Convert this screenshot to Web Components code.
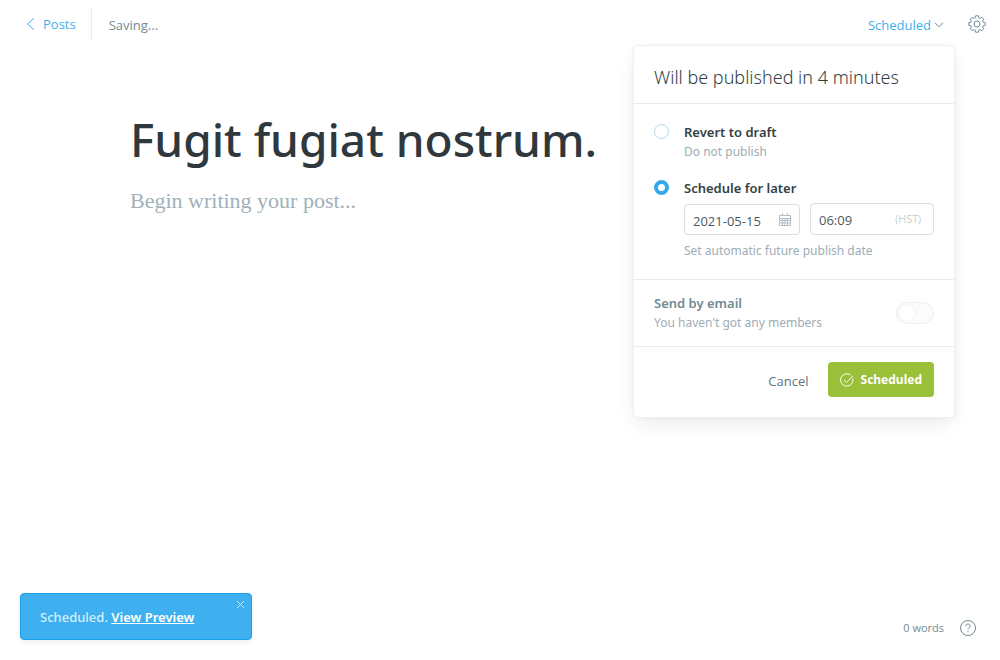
<!DOCTYPE html>
<html lang="en">
<head>
<meta charset="utf-8">
<meta name="viewport" content="width=device-width, initial-scale=1">
<title>Post editor</title>
<style>
  :root {
    --blue: #3eb0ef;
    --blue-dark: #1e9fea;
    --green: #9abf38;
    --dark: #343f44;
    --mid: #738a94;
    --soft: #95a6ae;
    --line: #e3edf3;
    --input-line: #d3e0ea;
  }
  html, body { margin: 0; }
  body {
    background: #fff;
    color: var(--dark);
    font: 400 13px/20px "Open Sans", "Noto Sans", sans-serif;
  }
</style>
</head>
<body>
<post-editor></post-editor>

<script>
function define(name, html) {
  const template = document.createElement('template');
  template.innerHTML = html;
  customElements.define(name, class extends HTMLElement {
    constructor() {
      super();
      this.attachShadow({ mode: 'open' }).append(template.content.cloneNode(true));
    }
  });
}

define('editor-toolbar', `
<style>
  :host { display: flex; align-items: center; height: 48px; padding: 0 14px 0 26px; box-sizing: border-box; position: relative; }
  a { display: flex; align-items: center; gap: 8px; height: 34px; padding-right: 15px; border-right: 1px solid var(--line); color: var(--blue); text-decoration: none; }
  .state { margin-left: 17px; padding-top: 2px; color: var(--mid); }
  .right { margin-left: auto; display: flex; align-items: center; gap: 24px; }
  button { display: flex; align-items: center; gap: 3px; padding: 0; border: 0; background: none; color: var(--blue); font: inherit; cursor: pointer; }
  .status { padding-top: 2px; }
  svg { display: block; fill: none; stroke: var(--mid); }
  a svg { stroke: var(--blue); }
  ::slotted(publish-menu) { position: absolute; top: 45px; right: 45px; z-index: 1; }
</style>
<a href="#posts"><svg width="9" height="14" viewBox="0 0 9 14"><path d="M8 1.2 1.5 7 8 12.8"/></svg>Posts</a>
<span class="state">Saving...</span>
<div class="right">
  <button class="status" aria-haspopup="true" aria-expanded="true">Scheduled<svg width="10" height="8" viewBox="0 0 10 8"><path d="m1 1.8 4 4 4-4"/></svg></button>
  <button aria-label="Settings"><svg width="18" height="18" viewBox="0 0 18 18" stroke-linejoin="round"><circle cx="9" cy="9" r="3"/><path d="M7.200 2.700 7.600.8h2.800l.4 1.900 1.300.6 1.700-1 1.900 1.900-1 1.700.5 1.300 2 .5v2.600l-2 .5-.5 1.300 1 1.700-1.900 1.900-1.700-1-1.300.5-.4 2H7.600l-.4-2-1.300-.5-1.700 1-1.900-1.900 1-1.700-.5-1.300-2-.5V7.700l2-.5.5-1.300-1-1.700 1.900-1.900 1.700 1Z"/></svg></button>
</div>
<slot></slot>`);

define('publish-option', `
<style>
  :host { display: flex; gap: 15px; }
  .mark { display: flex; padding-top: 2px; }
  .body { flex: 1; min-width: 0; }
</style>
<div class="mark"><slot name="control"></slot></div>
<div class="body"><slot></slot></div>`);

define('date-time-field', `
<style>
  :host { display: flex; align-items: flex-end; gap: 10px; }
  .box { display: flex; align-items: center; box-sizing: border-box; height: 31px; padding: 0 8px; border: 1px solid var(--input-line); border-radius: 4px; }
  .date { flex: none; width: 116px; }
  .time { flex: 1; height: 32px; padding-right: 12px; }
  .box, input { min-width: 0; }
  input { flex: 1; width: 0; height: 28px; padding: 2px 0 0; box-sizing: border-box; border: 0; outline: 0; background: none; color: #4b5960; font: inherit; }
  svg { display: block; fill: none; stroke: #b3bfc6; }
  .zone { color: #a9b7be; font-size: 11px; font-weight: 300; }
</style>
<div class="box date"><input type="text" value="2021-05-15" aria-label="Publish date"><svg width="12" height="13" viewBox="0 0 12 13"><path d="M.5 2.5h11v10H.5zM.5 5.5h11M.5 7.5h11M.5 10h11M3.5 5v7.500M6 5v7.500M8.500 5v7.500M3.500 0v3M8.500 0v3"/></svg></div>
<div class="box time"><input type="text" value="06:09" aria-label="Publish time"><span class="zone">(HST)</span></div>`);

define('publish-menu', `
<style>
  :host { display: block; width: 322px; box-sizing: border-box; background: #fff; border: 1px solid #eef1f3; border-radius: 5px; box-shadow: 0 8px 20px -4px rgba(21,33,42,.1), 0 0 5px rgba(21,33,42,.04); }
  h2 { margin: 0; padding: 19px 20px 13px; font-family: "Noto Sans", sans-serif; font-size: 18px; line-height: 25px; font-weight: 300; border-bottom: 1px solid var(--line); }
  .options { display: grid; gap: 17px; padding: 18px 20px 19px; border-bottom: 1px solid var(--line); }
  .name { display: block; font-family: "Noto Sans", sans-serif; font-weight: 600; line-height: 20px; }
  .note { margin: 0; color: #9dadb5; font-family: "Noto Sans", sans-serif; font-size: 12px; line-height: 19px; font-weight: 400; }
  input[type=radio] { appearance: none; box-sizing: border-box; width: 15px; height: 15px; margin: 0; border: 1px solid #b8d5e8; border-radius: 50%; background: #fff; }
  input[type=radio]:checked { border: 4px solid #36a8ec; }
  date-time-field { margin: 5px 0 6px; }
  .email { display: flex; align-items: center; justify-content: space-between; padding: 13px 20px 14px; border-bottom: 1px solid var(--line); }
  .email .name { color: var(--mid); }
  .switch { appearance: none; display: flex; box-sizing: border-box; width: 38px; height: 22px; margin: 0; padding: 2px; border: 1px solid #ebf0f4; border-radius: 11px; background: #fafbfc; }
  .switch::before { content: ""; width: 16px; height: 16px; border-radius: 50%; background: #fff; box-shadow: 0 0 2px #dfe5e9; }
  footer { display: flex; justify-content: flex-end; align-items: center; gap: 19px; padding: 15px 20px 20px; }
  button { display: flex; align-items: center; gap: 7px; height: 35px; padding: 2px 0 0; box-sizing: border-box; border: 0; border-radius: 4px; background: none; color: #5f747e; font: inherit; cursor: pointer; }
  .primary { padding: 1px 12px 0; background: var(--green); color: #fff; font-family: "Noto Sans", sans-serif; font-size: 12px; font-weight: 700; }
</style>
<h2>Will be published in 4 minutes</h2>
<div class="options">
  <publish-option>
    <input slot="control" type="radio" name="when" id="draft">
    <label class="name" for="draft">Revert to draft</label>
    <p class="note">Do not publish</p>
  </publish-option>
  <publish-option>
    <input slot="control" type="radio" name="when" id="later" checked>
    <label class="name" for="later">Schedule for later</label>
    <date-time-field></date-time-field>
    <p class="note">Set automatic future publish date</p>
  </publish-option>
</div>
<div class="email">
  <div>
    <label class="name" for="email">Send by email</label>
    <p class="note">You haven't got any members</p>
  </div>
  <input class="switch" type="checkbox" role="switch" id="email" disabled>
</div>
<footer>
  <button>Cancel</button>
  <button class="primary"><svg width="14" height="14" viewBox="0 0 14 14" fill="none" stroke="#fff"><path d="M12.800 5.500A6.200 6.200 0 1 1 10.500 2"/><path d="m4 7 2.500 2.500L12.800 3"/></svg>Scheduled</button>
</footer>`);

define('post-canvas', `
<style>
  :host { display: block; box-sizing: border-box; width: 100%; max-width: 740px; margin: 0 auto; padding-top: 59px; }
  input, textarea { display: block; box-sizing: border-box; width: 100%; margin: 0; padding: 0; border: 0; outline: 0; background: none; resize: none; }
  input { height: 64px; color: #2f383d; font: 500 46px/64px "Noto Sans", sans-serif; }
  textarea { height: 120px; margin-top: 14px; font: 400 22px/32px "Liberation Serif", serif; overflow: hidden; }
  ::placeholder { color: #9fb1bb; opacity: 1; }
</style>
<input type="text" value="Fugit fugiat nostrum." aria-label="Post title">
<textarea placeholder="Begin writing your post..." aria-label="Post body"></textarea>`);

define('toast-message', `
<style>
  :host { display: flex; align-items: flex-start; box-sizing: border-box; width: 232px; height: 47px; padding: 0 6px 0 19px; border: 1px solid var(--blue-dark); border-radius: 4px; background: var(--blue); color: #d5effc; box-shadow: 0 2px 5px rgba(21,33,42,.08); }
  p { flex: 1; margin: 0; line-height: 46px; font-family: "Noto Sans", sans-serif; font-weight: 500; }
  ::slotted(a) { color: #fff; font-weight: 600; }
  button { display: flex; margin-top: 6px; padding: 0; border: 0; background: none; }
</style>
<p><slot></slot></p>
<button aria-label="Close"><svg width="9" height="9" viewBox="0 0 9 9" stroke="#c5e7fa"><path d="m1 1 7 7M8 1 1 8"/></svg></button>`);

define('word-count', `
<style>
  :host { display: flex; align-items: center; gap: 16px; height: 24px; color: var(--mid); font-size: 11px; }
  a { display: flex; color: inherit; text-decoration: none; }
</style>
<slot></slot>
<a href="#help" aria-label="Help"><svg width="16" height="16" viewBox="0 0 16 16" fill="none" stroke="currentColor"><circle cx="8" cy="8" r="7.500"/><path d="M5.800 6.200c0-1.300 1-2.200 2.200-2.200s2.200.9 2.200 2c0 1.500-2.200 1.700-2.200 3.500M8 11v1.200"/></svg></a>`);

define('post-editor', `
<style>
  :host { display: flex; flex-direction: column; min-height: 100vh; }
  main { flex: 1; padding: 0 24px; }
  footer { display: flex; justify-content: space-between; align-items: flex-end; padding: 0 24px 20px 20px; }
</style>
<editor-toolbar><publish-menu></publish-menu></editor-toolbar>
<main><post-canvas></post-canvas></main>
<footer>
  <toast-message>Scheduled. <a href="#preview">View Preview</a></toast-message>
  <word-count>0 words</word-count>
</footer>`);
</script>
</body>
</html>
